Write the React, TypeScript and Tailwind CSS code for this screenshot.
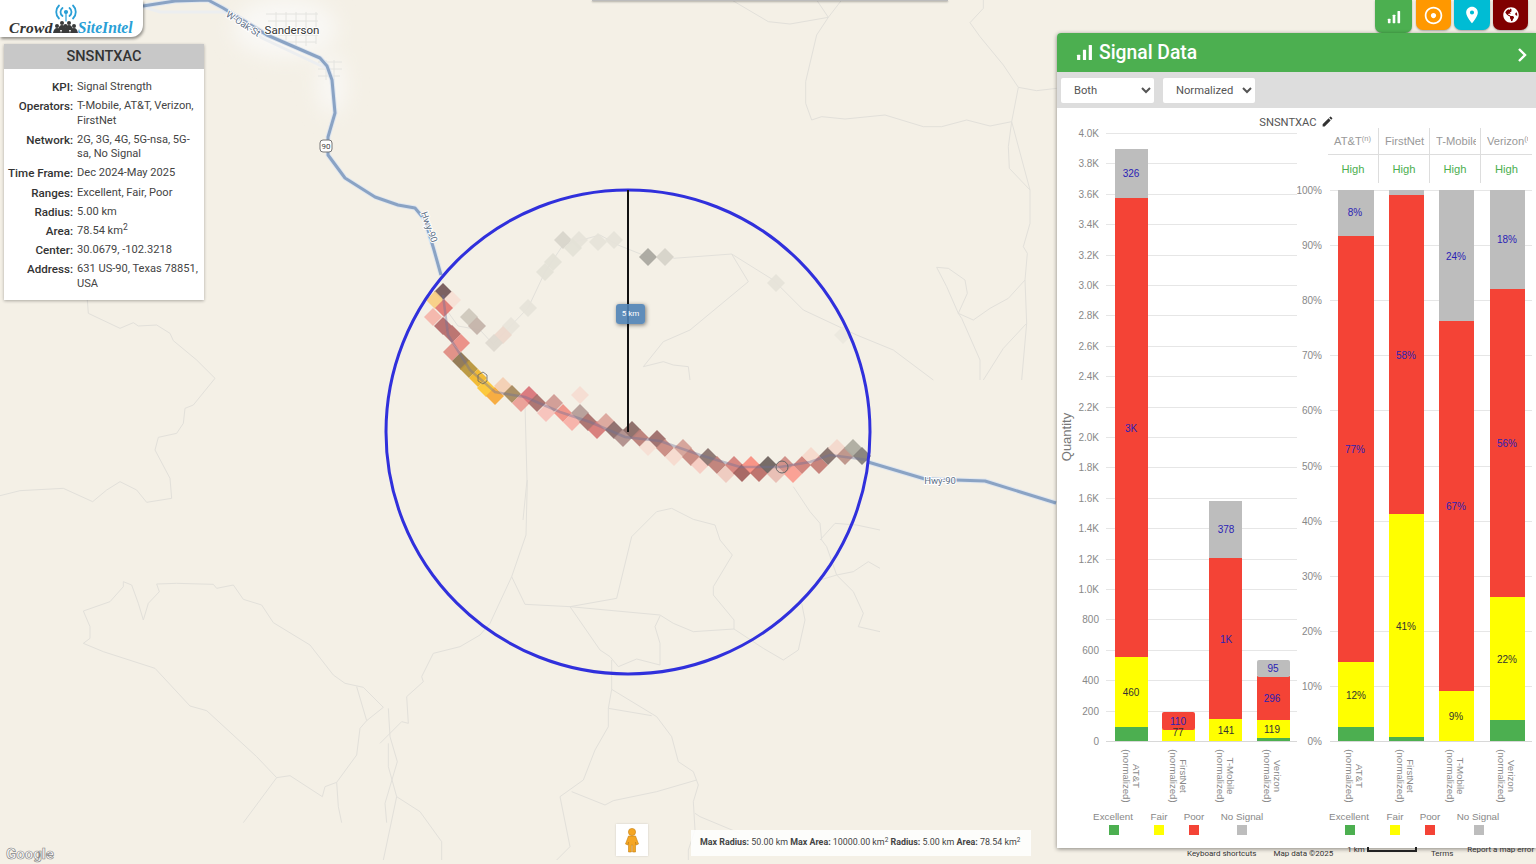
import React from 'react'
import { MdAdjust, MdEdit, MdLocationOn } from 'react-icons/md'
import { FaGlobeAmericas } from 'react-icons/fa'

// map tracks were read off at 3x, so each set keeps its crop origin
const track = (ox: number, oy: number, pts: number[][]) =>
    pts.map(([x, y]) => `${ox + x / 3},${oy + y / 3}`).join(' ')

const terrain = [
    track(0, 300, [[262, 0], [265, 40], [360, 85], [400, 68], [415, 78], [470, 75], [510, 100], [520, 122], [590, 180], [645, 235], [580, 315], [555, 325], [550, 370], [530, 400], [475, 412], [465, 450], [510, 535], [515, 595], [440, 607], [410, 570], [360, 545], [320, 570], [278, 605], [190, 565], [60, 572], [0, 587]]),
    track(0, 300, [[370, 845], [395, 855], [415, 910], [430, 960], [445, 910], [478, 875], [470, 852], [530, 850], [640, 853], [650, 865], [700, 855], [730, 898], [785, 915], [820, 968], [930, 1035], [1000, 1125], [1035, 1150], [1090, 1162], [1150, 1222], [1100, 1262], [1080, 1285], [1070, 1365], [1010, 1447], [975, 1460], [967, 1490], [870, 1427], [830, 1433], [770, 1370], [620, 1232], [570, 1218], [465, 1105], [310, 1055], [250, 1030], [270, 1015], [270, 980], [250, 933], [330, 905], [370, 860], [370, 845]]),
    track(0, 300, [[830, 1433], [730, 1568]]),
    track(0, 300, [[1010, 1447], [1015, 1520], [1025, 1568]]),
    track(0, 300, [[1070, 1160], [1100, 1262]]),
    track(0, 300, [[1165, 1225], [1170, 1310], [1192, 1385], [1155, 1510], [1160, 1568]]),
    track(380, 480, [[442, 0], [438, 165], [395, 290], [330, 430], [300, 465], [240, 500], [160, 520], [125, 590], [130, 605], [80, 650], [85, 730], [65, 725], [0, 790]]),
    track(380, 480, [[395, 290], [435, 373], [570, 380], [710, 355], [755, 170], [830, 95], [875, 85], [940, 118], [1005, 135], [1020, 180], [1057, 225], [1000, 320], [1000, 345], [1062, 420], [1062, 447], [940, 455], [880, 430], [840, 405], [570, 380]]),
    track(380, 480, [[840, 408], [825, 440], [840, 490], [840, 555], [770, 537], [715, 560], [690, 530], [660, 510], [570, 380]]),
    track(380, 480, [[1062, 447], [1150, 505], [1210, 540], [1255, 510], [1275, 420], [1265, 370]]),
    track(380, 480, [[695, 540], [695, 628], [685, 685], [685, 740], [645, 810], [610, 900], [540, 950], [570, 1100], [530, 1140]]),
    track(380, 480, [[695, 628], [830, 710], [875, 770], [895, 845], [940, 875], [955, 915], [940, 965], [945, 1050], [925, 1110], [925, 1140]]),
    track(380, 480, [[685, 685], [815, 707]]),
    track(380, 480, [[950, 900], [830, 935], [700, 962], [675, 975], [575, 935]]),
    track(380, 480, [[945, 1000], [960, 1010], [1080, 1060]]),
    track(380, 480, [[1240, 20], [1290, 95], [1320, 130], [1325, 180], [1340, 200], [1370, 285], [1420, 335], [1450, 400], [1435, 440], [1500, 455]]),
    track(380, 480, [[1320, 180], [1365, 130], [1430, 135], [1500, 150]]),
    track(380, 480, [[1320, 300], [1370, 285], [1420, 275], [1465, 245], [1500, 265]]),
    track(380, 480, [[25, 790], [25, 860], [50, 950], [10, 1140]]),
    track(380, 480, [[50, 950], [120, 995], [185, 1085], [185, 1140]]),
    track(640, 0, [[275, 0], [385, 65], [450, 72], [565, 52], [530, 0]]),
    track(640, 0, [[565, 52], [605, 0]]),
    track(640, 0, [[565, 52], [530, 105], [497, 245], [497, 310], [515, 360], [545, 350], [615, 357], [735, 345], [850, 380], [905, 380], [980, 360], [1050, 378], [1115, 365], [1135, 262], [1090, 195], [1020, 110], [990, 68], [1030, 25], [1030, 0]]),
    track(640, 0, [[1135, 262], [1190, 272], [1250, 265]]),
    track(640, 0, [[1115, 365], [1105, 440], [1108, 505], [1170, 570], [1115, 365]]),
    track(640, 0, [[1170, 570], [1170, 670], [1150, 740], [1162, 760], [1155, 840], [1160, 970], [1145, 1140]]),
    track(640, 0, [[1155, 840], [1105, 895], [1050, 925], [1000, 960], [955, 940], [965, 955], [1020, 1080], [1020, 1140]]),
    track(640, 0, [[955, 940], [920, 860], [890, 802], [925, 805], [975, 840], [982, 880], [955, 940]]),
    track(640, 0, [[1160, 970], [1090, 1045], [1030, 1140]]),
    track(640, 0, [[100, 775], [275, 762], [325, 845], [150, 990], [70, 1025], [10, 1100], [70, 1085], [100, 1095], [145, 1100], [150, 1140]]),
    track(640, 0, [[275, 762], [400, 840], [490, 930], [650, 1005], [760, 1050], [880, 1140]]),
    '494,343 528,308 545,272 563,245 600,235 618,245 648,257',
    '443,305 458,326 480,330 494,345',
    '525,405 527,480 523,520',
]

const cells: [number, number, string][] = [
    [443, 292, '#75595a'], [435, 300, '#f8cf85'], [452, 300, '#f7dfd5'], [444, 308, '#e07a74'], [433, 317, '#f4b5ab'],
    [443, 326, '#b56b6b'], [452, 334, '#b86f6b'], [461, 343, '#ea8d85'], [452, 352, '#df8d84'], [461, 361, '#8f7650'],
    [469, 369, '#b8963c'], [478, 378, '#f0b72c'], [486, 388, '#fcc635'], [495, 396, '#f7a93a'], [503, 386, '#f3cfb3'],
    [512, 394, '#a68a5f'], [521, 403, '#ea9e96'], [529, 395, '#d9757a'], [537, 403, '#a9706d'], [546, 413, '#f7c1ba'],
    [554, 403, '#d09a94'], [563, 413, '#ee8f85'], [572, 422, '#f7b0a8'], [580, 413, '#b59d98'], [580, 395, '#f6dcd2'],
    [588, 422, '#a9706d'], [597, 430, '#d77a78'], [606, 422, '#dba59c'], [614, 430, '#8c6c6a'], [623, 438, '#b08e8b'],
    [632, 430, '#8a6a66'], [640, 438, '#bb7e78'], [648, 447, '#f6ded4'], [657, 439, '#9d6d6a'], [665, 448, '#c98a82'],
    [674, 457, '#f6dacf'], [683, 448, '#d4a198'], [691, 457, '#c78880'], [700, 465, '#f6cbc2'], [708, 457, '#8a7470'],
    [717, 465, '#bf7f78'], [726, 474, '#eec9bf'], [734, 465, '#d5827c'], [742, 473, '#a3625f'], [751, 465, '#f98f82'],
    [759, 473, '#bb6e68'], [768, 465, '#706460'], [776, 474, '#e8bdb3'], [785, 465, '#cf8c85'], [793, 474, '#fa9d90'],
    [802, 465, '#d07f78'], [811, 456, '#f6d8cb'], [819, 465, '#c57d76'], [828, 456, '#85706c'], [837, 448, '#f3d8cc'],
    [845, 456, '#bd9288'], [853, 448, '#aeaca0'], [862, 456, '#85807a'],
    [563, 240, '#d8d5cb'], [579, 240, '#e6e3d9'], [573, 248, '#e4e1d7'], [598, 242, '#e6e3d9'], [614, 240, '#e6e3d9'],
    [648, 257, '#aaa8a0'], [665, 257, '#d6d3c9'], [553, 262, '#e4e1d7'], [545, 272, '#e4e1d7'], [528, 308, '#e6e3d9'],
    [511, 326, '#e8e4da'], [503, 335, '#ecd8cc'], [494, 343, '#ded9d0'], [469, 317, '#cfc8bd'], [477, 326, '#c4b3aa'],
    [776, 283, '#e6e3d9'], [843, 335, '#ebe8de'],
]

const COLORS = { good: '#4caf50', fair: '#ffff00', poor: '#f44336', none: '#bdbdbd' }
const BLUE = '#2b22b5'
const DARK = '#333333'

type Segment = { y1: number; y2: number; fill: string; rx?: number }
type Label = { x: number; y: number; text: string; fill: string }
type Bar = { x: number; w: number; segs: Segment[] }

const leftBars: Bar[] = [
    { x: 1115, w: 33, segs: [{ y1: 727, y2: 741, fill: COLORS.good }, { y1: 657, y2: 727, fill: COLORS.fair }, { y1: 198, y2: 657, fill: COLORS.poor }, { y1: 149, y2: 198, fill: COLORS.none }] },
    { x: 1162, w: 33, segs: [{ y1: 729, y2: 741, fill: COLORS.fair }, { y1: 712, y2: 730, fill: COLORS.poor, rx: 2 }] },
    { x: 1209, w: 33, segs: [{ y1: 719, y2: 741, fill: COLORS.fair }, { y1: 558, y2: 719, fill: COLORS.poor }, { y1: 501, y2: 558, fill: COLORS.none }] },
    { x: 1257, w: 33, segs: [{ y1: 738, y2: 741, fill: COLORS.good }, { y1: 720, y2: 738, fill: COLORS.fair }, { y1: 676, y2: 720, fill: COLORS.poor }, { y1: 660, y2: 677, fill: COLORS.none, rx: 2 }] },
]

const leftLabels: Label[] = [
    { x: 1131, y: 173, text: '326', fill: BLUE }, { x: 1131, y: 428, text: '3K', fill: BLUE }, { x: 1131, y: 692, text: '460', fill: DARK },
    { x: 1178, y: 721, text: '110', fill: BLUE }, { x: 1178, y: 732, text: '77', fill: DARK }, { x: 1226, y: 529, text: '378', fill: BLUE },
    { x: 1226, y: 639, text: '1K', fill: BLUE }, { x: 1226, y: 730, text: '141', fill: DARK }, { x: 1273, y: 668, text: '95', fill: BLUE },
    { x: 1272, y: 698, text: '296', fill: BLUE }, { x: 1272, y: 729, text: '119', fill: DARK },
]

const rightBars: Bar[] = [
    { x: 1338, w: 36, segs: [{ y1: 727, y2: 741, fill: COLORS.good }, { y1: 662, y2: 727, fill: COLORS.fair }, { y1: 236, y2: 662, fill: COLORS.poor }, { y1: 190, y2: 236, fill: COLORS.none }] },
    { x: 1389, w: 35, segs: [{ y1: 737, y2: 741, fill: COLORS.good }, { y1: 514, y2: 737, fill: COLORS.fair }, { y1: 195, y2: 514, fill: COLORS.poor }, { y1: 190, y2: 195, fill: COLORS.none }] },
    { x: 1439, w: 35, segs: [{ y1: 691, y2: 741, fill: COLORS.fair }, { y1: 321, y2: 691, fill: COLORS.poor }, { y1: 190, y2: 321, fill: COLORS.none }] },
    { x: 1490, w: 35, segs: [{ y1: 720, y2: 741, fill: COLORS.good }, { y1: 597, y2: 720, fill: COLORS.fair }, { y1: 289, y2: 597, fill: COLORS.poor }, { y1: 190, y2: 289, fill: COLORS.none }] },
]

const rightLabels: Label[] = [
    { x: 1355, y: 212, text: '8%', fill: BLUE }, { x: 1355, y: 449, text: '77%', fill: BLUE }, { x: 1356, y: 695, text: '12%', fill: DARK },
    { x: 1406, y: 355, text: '58%', fill: BLUE }, { x: 1406, y: 626, text: '41%', fill: DARK }, { x: 1456, y: 256, text: '24%', fill: BLUE },
    { x: 1456, y: 506, text: '67%', fill: BLUE }, { x: 1456, y: 716, text: '9%', fill: DARK }, { x: 1507, y: 239, text: '18%', fill: BLUE },
    { x: 1507, y: 443, text: '56%', fill: BLUE }, { x: 1507, y: 659, text: '22%', fill: DARK },
]

const info: [string, React.ReactNode][] = [
    ['KPI:', 'Signal Strength'],
    ['Operators:', 'T-Mobile, AT&T, Verizon, FirstNet'],
    ['Network:', '2G, 3G, 4G, 5G-nsa, 5G-sa, No Signal'],
    ['Time Frame:', 'Dec 2024-May 2025'],
    ['Ranges:', 'Excellent, Fair, Poor'],
    ['Radius:', '5.00 km'],
    ['Area:', <>78.54 km<sup className="text-[8.5px] leading-none">2</sup></>],
    ['Center:', '30.0679, -102.3218'],
    ['Address:', '631 US-90, Texas 78851, USA'],
]

const SignalBars = ({ size }: { size: number }) => (
    <svg width={size} height={size} viewBox="0 0 16 16" fill="white">
        <rect x="1" y="10" width="3" height="5" rx="0.5" />
        <rect x="6.5" y="5.5" width="3" height="9.5" rx="0.5" />
        <rect x="12" y="1" width="3" height="14" rx="0.5" />
    </svg>
)

const Logo = () => (
    <div className="absolute left-0 top-0 z-10 flex h-[37px] w-[143px] items-end rounded-br-[12px] bg-white pl-[9px] shadow-[1px_2px_3px_rgba(0,0,0,0.4)]">
        <svg className="absolute left-[53px] top-[4px]" width="26" height="18" viewBox="0 0 26 18" fill="none" stroke="#2a9fd6" strokeWidth="1.8" strokeLinecap="round">
            <path d="M9.5 4 a5 5 0 0 0 0 8" />
            <path d="M6 1.5 a9 9 0 0 0 0 13" />
            <path d="M16.5 4 a5 5 0 0 1 0 8" />
            <path d="M20 1.5 a9 9 0 0 1 0 13" />
            <circle cx="13" cy="8" r="1.2" fill="#2a9fd6" />
            <path d="M13 9 V17" strokeWidth="1.2" />
        </svg>
        <span className="text-[15.5px] leading-[18px] font-bold tracking-[0.3px] text-[#333] italic font-['Liberation_Serif',serif]">Crowd</span>
        <svg className="mb-[4px]" width="25" height="13" viewBox="0 0 25 13" fill="#3a3a3a">
            <circle cx="4" cy="6" r="2" /><circle cx="9" cy="3" r="2" /><circle cx="16" cy="3" r="2" /><circle cx="21" cy="6" r="2" /><circle cx="12.5" cy="6" r="2" />
            <path d="M0 13 q1-5 4-5 q3 0 4 5z M5 10 q1-5 4-5 q3 0 4 5z M12 10 q1-5 4-5 q3 0 4 5z M17 13 q1-5 4-5 q3 0 4 5z M8 13 q1-5 4.5-5 q3.5 0 4.5 5z" />
        </svg>
        <span className="text-[15.7px] leading-[18px] font-bold text-[#2a9fd6] italic font-['Liberation_Serif',serif]">SiteIntel</span>
    </div>
)

const InfoCard = () => (
    <div className="absolute left-[4px] top-[44px] z-10 w-[200px] bg-white shadow-[0_1px_3px_rgba(0,0,0,0.3)]">
        <h3 className="flex h-[25px] items-center justify-center bg-[#c8c8c8] text-[14.5px] font-medium text-[#333]">SNSNTXAC</h3>
        <div className="grid grid-cols-[69px_123px] gap-x-[4px] gap-y-[4.8px] pt-[11px] pb-[9px] text-[11.1px] leading-[14.4px]">
            {info.map(([label, value]) => (
                <React.Fragment key={label}>
                    <span className="text-right text-[11.6px] font-medium whitespace-nowrap text-[#333]">{label}</span>
                    <span className="text-[#444]">{value}</span>
                </React.Fragment>
            ))}
        </div>
    </div>
)

const MapLayer = () => (
    <svg className="absolute inset-0" width="1536" height="864" viewBox="0 0 1536 864">
        <defs>
            <filter id="townGlow" x="-30%" y="-30%" width="160%" height="160%">
                <feGaussianBlur stdDeviation="10" />
            </filter>
        </defs>
        <g filter="url(#townGlow)" fill="#f9f8f5">
            <ellipse cx="285" cy="28" rx="52" ry="30" />
            <ellipse cx="332" cy="85" rx="14" ry="30" />
        </g>
        <g stroke="#e4e4e0" strokeWidth="1" fill="none">
            <path d="M266 14 H318 M268 21 H318 M272 28 H318 M278 35 H318 M284 42 H316" />
            <path d="M276 12 V30 M286 12 V40 M296 12 V46 M306 12 V46 M316 12 V44" />
            <path d="M318 62 H342 M318 69 H342 M318 76 H340 M326 60 V80 M334 60 V80" />
        </g>
        <polyline points="120,0 160,12 225,12 262,38 330,70" fill="none" stroke="#eceef0" strokeWidth="3" />
        <g fill="none" stroke="#e2e0da" strokeWidth="1">
            {terrain.map((points, i) => <polyline key={i} points={points} />)}
        </g>
        <polyline
            points="143,6 175,1 208,0 223,8 267,35 320,58 327,66 332,80 335,113 328,137 328,155 345,178 375,197 398,205 415,208 425,220 434,250 441,275"
            fill="none" stroke="#dfe6ef" strokeWidth="5" strokeLinejoin="round"
        />
        <polyline
            points="143,6 175,1 208,0 223,8 267,35 320,58 327,66 332,80 335,113 328,137 328,155 345,178 375,197 398,205 415,208 425,220 434,250 441,275"
            fill="none" stroke="#8aa3c4" strokeWidth="3" strokeLinejoin="round"
        />
        <polyline points="868,462 925,479 985,481 1056,503" fill="none" stroke="#dfe6ef" strokeWidth="5" strokeLinejoin="round" />
        <polyline points="868,462 925,479 985,481 1056,503" fill="none" stroke="#8aa3c4" strokeWidth="3" strokeLinejoin="round" />
        <g>
            {cells.map(([x, y, c]) => (
                <polygon key={`${x}-${y}`} points={`${x},${y - 9} ${x + 9},${y} ${x},${y + 9} ${x - 9},${y}`} fill={c} opacity="0.95" />
            ))}
        </g>
        <polyline
            points="443,295 448,335 470,370 495,392 525,397 560,412 590,422 625,437 660,441 700,455 740,467 780,467 810,462 830,455 868,460"
            fill="none" stroke="#6f7199" strokeOpacity="0.4" strokeWidth="2.5"
        />
        <path d="M478 375 l5 -3 l4 3 v6 l-4 3 l-5 -3z" fill="none" stroke="#666" strokeWidth="0.8" />
        <circle cx="782" cy="467" r="6" fill="none" stroke="#666" strokeWidth="1" />
        <circle cx="628" cy="432" r="242" fill="none" stroke="#3030dc" strokeWidth="3" />
        <line x1="628" y1="190" x2="628" y2="432" stroke="#111" strokeWidth="2" />
        <rect x="320" y="140" width="12" height="12" rx="3" fill="white" stroke="#777" />
        <text x="326" y="149" fontSize="8" textAnchor="middle" fill="#444">90</text>
        <g fontFamily="Roboto, sans-serif" fill="#5d6f86" fontSize="9.5" stroke="white" strokeWidth="2" paintOrder="stroke">
            <text x="243" y="27" textAnchor="middle" transform="rotate(33 243 24)">W-Oak-St</text>
            <text x="429" y="230" textAnchor="middle" transform="rotate(70 429 227)">Hwy-90</text>
            <text x="940" y="484" textAnchor="middle">Hwy-90</text>
            <text x="292" y="34" textAnchor="middle" fontSize="11.5" fill="#333">Sanderson</text>
        </g>
    </svg>
)

const Axis = ({ ticks, x1, x2, labelX }: { ticks: [string, number][]; x1: number; x2: number; labelX: number }) => (
    <>
        {ticks.map(([t, y]) => (
            <g key={t}>
                <line x1={x1} x2={x2} y1={y + 0.5} y2={y + 0.5} stroke={y === 741 ? '#d8d8d8' : '#e6e6e6'} />
                <text x={labelX} y={y + 4} textAnchor="end" fontSize="10" fill="#888">{t}</text>
            </g>
        ))}
    </>
)

const Bars = ({ bars, labels }: { bars: Bar[]; labels: Label[] }) => (
    <>
        {bars.map((b, i) => (
            <g key={i}>
                {b.segs.map((s, j) => <rect key={j} x={b.x} y={s.y1} width={b.w} height={s.y2 - s.y1} fill={s.fill} rx={s.rx} />)}
            </g>
        ))}
        {labels.map((l, i) => (
            <text key={i} x={l.x} y={l.y + 4} textAnchor="middle" fontSize="10" fill={l.fill}>{l.text}</text>
        ))}
    </>
)

const XNames = ({ items }: { items: [string, number][] }) => (
    <g fontSize="9.6" fill="#888" textAnchor="middle">
        {items.map(([name, x]) => (
            <g key={name}>
                <text transform={`rotate(90 ${x} 776)`} x={x} y="776">{name}</text>
                <text transform={`rotate(90 ${x - 10} 776)`} x={x - 10} y="776">(normalized)</text>
            </g>
        ))}
    </g>
)

const Legend = ({ items }: { items: [string, number, number, string][] }) => (
    <g fontSize="9.8" fill="#888" textAnchor="middle">
        {items.map(([name, tx, sx, fill]) => (
            <g key={name}>
                <text x={tx} y="820">{name}</text>
                <rect x={sx} y="825" width="10" height="10" fill={fill} />
            </g>
        ))}
    </g>
)

const CountChart = () => {
    const ticks: [string, number][] = ['0', '200', '400', '600', '800', '1.0K', '1.2K', '1.4K', '1.6K', '1.8K', '2.0K', '2.2K', '2.4K', '2.6K', '2.8K', '3.0K', '3.2K', '3.4K', '3.6K', '3.8K', '4.0K'].map((t, i) => [t, Math.round(741 - i * 30.4)])
    return (
        <svg className="shrink-0 font-['Liberation_Sans',sans-serif]" width="240" height="720" viewBox="1057 128 240 720">
            <Axis ticks={ticks} x1={1106} x2={1297} labelX={1099} />
            <text transform="rotate(-90 1071 437)" x="1071" y="437" textAnchor="middle" fontSize="13" fill="#777">Quantity</text>
            <Bars bars={leftBars} labels={leftLabels} />
            <XNames items={[['AT&T', 1133], ['FirstNet', 1180], ['T-Mobile', 1227], ['Verizon', 1274]]} />
            <Legend items={[['Excellent', 1113, 1109, COLORS.good], ['Fair', 1159, 1154, COLORS.fair], ['Poor', 1194, 1189, COLORS.poor], ['No Signal', 1242, 1237, COLORS.none]]} />
        </svg>
    )
}

const PercentChart = () => {
    const ticks: [string, number][] = [0, 10, 20, 30, 40, 50, 60, 70, 80, 90, 100].map((p) => [`${p}%`, Math.round(741 - p * 5.51)])
    return (
        <svg className="block font-['Liberation_Sans',sans-serif]" width="239" height="664" viewBox="1297 184 239 664">
            <Axis ticks={ticks} x1={1330} x2={1532} labelX={1322} />
            <Bars bars={rightBars} labels={rightLabels} />
            <XNames items={[['AT&T', 1356], ['FirstNet', 1407], ['T-Mobile', 1457], ['Verizon', 1508]]} />
            <Legend items={[['Excellent', 1349, 1345, COLORS.good], ['Fair', 1395, 1390, COLORS.fair], ['Poor', 1430, 1425, COLORS.poor], ['No Signal', 1478, 1474, COLORS.none]]} />
        </svg>
    )
}

const OperatorTable = () => {
    const heads: React.ReactNode[] = [
        <>AT&amp;T<sup className="text-[7.5px]">(n)</sup></>,
        'FirstNet',
        'T-Mobile',
        <>Verizon<sup className="text-[7.5px]">(n)</sup></>,
    ]
    return (
        <div className="ml-[31px] grid h-[56px] w-[204px] grid-cols-4 grid-rows-[27px_29px] text-[11.2px] font-['Liberation_Sans',sans-serif]">
            {heads.map((h, i) => (
                <div key={i} className={`overflow-hidden border-b border-[#ddd] pl-[6px] leading-[26px] whitespace-nowrap text-[#999] ${i < 3 ? 'border-r' : ''}`}>
                    <div className={i === 2 ? 'w-[40px] overflow-hidden' : i === 3 ? 'w-[41px] overflow-hidden' : ''}>{h}</div>
                </div>
            ))}
            {heads.map((_, i) => (
                <div key={i} className={`mb-[1px] border-[#ddd] text-center leading-[28px] text-[#4caf50] ${i < 3 ? 'border-r' : ''}`}>High</div>
            ))}
        </div>
    )
}

const SignalPanel = () => (
    <div className="absolute left-[1057px] top-[33px] z-10 w-[479px] overflow-hidden rounded-tl-[4px] bg-white shadow-[0_1px_4px_rgba(0,0,0,0.45)]">
        <div className="flex h-[39px] items-center bg-[#4caf50] pl-[19px] pr-[8px]">
            <SignalBars size={17} />
            <span className="mt-[1px] ml-[6px] text-[19.3px] font-medium text-white">Signal Data</span>
            <svg className="mt-[4px] ml-auto" width="12" height="16" viewBox="0 0 12 16" fill="none" stroke="white" strokeWidth="2.4">
                <path d="M3 2 L9 8 L3 14" />
            </svg>
        </div>
        <div className="flex h-[36px] items-center gap-[9px] bg-[#dddddd] pl-[4px]">
            <select defaultValue="Both" className="h-[25px] w-[93px] rounded-[2px] bg-white pl-[9px] text-[11.2px] text-[#555]">
                <option>Both</option>
            </select>
            <select defaultValue="Normalized" className="h-[25px] w-[92px] rounded-[2px] bg-white pl-[9px] text-[11.2px] text-[#555]">
                <option>Normalized</option>
            </select>
        </div>
        <div className="flex h-[20px] items-start justify-center gap-[4px] pt-[7px] text-[11.2px] leading-[15px] text-[#555]">
            SNSNTXAC <MdEdit className="text-[13px] text-[#333]" />
        </div>
        <div className="flex">
            <CountChart />
            <div>
                <OperatorTable />
                <PercentChart />
            </div>
        </div>
    </div>
)

const TopButtons = () => (
    <div className="absolute right-[8px] top-0 z-10 flex gap-[3px] text-white">
        <button className="mr-[1px] flex h-[33px] w-[37px] items-center justify-center rounded-b-[7px] bg-[#4caf50] shadow-[0_1px_2px_rgba(0,0,0,0.3)]"><SignalBars size={14} /></button>
        <button className="flex h-[30px] w-[35px] items-center justify-center rounded-b-[7px] bg-[#ff9800] shadow-[0_1px_2px_rgba(0,0,0,0.3)]"><MdAdjust className="text-[21px]" /></button>
        <button className="flex h-[30px] w-[36px] items-center justify-center rounded-b-[7px] bg-[#00bcd4] shadow-[0_1px_2px_rgba(0,0,0,0.3)]"><MdLocationOn className="text-[20px]" /></button>
        <button className="flex h-[30px] w-[35px] items-center justify-center rounded-b-[7px] bg-[#800000] shadow-[0_1px_2px_rgba(0,0,0,0.3)]"><FaGlobeAmericas className="text-[16px]" /></button>
    </div>
)

const Pegman = () => (
    <div className="absolute left-[616px] top-[824px] flex h-[32px] w-[32px] items-center justify-center bg-white shadow-[0_0_2px_rgba(0,0,0,0.15)]">
        <svg width="14" height="25" viewBox="0 0 14 25" fill="#f5a623" stroke="#c47f12" strokeWidth="0.6">
            <circle cx="7" cy="4" r="3.6" />
            <path d="M3.5 8 H10.5 L13.5 16 L11 17 L10.5 14 V24 H7.6 V17 H6.4 V24 H3.5 V14 L3 17 L0.5 16Z" />
        </svg>
    </div>
)

const Attribution = () => (
    <>
        <div className="absolute left-[691px] top-[830px] flex h-[26px] w-[340px] items-center bg-white/85 pl-[9px] text-[8.9px] whitespace-nowrap text-[#444]">
            <span>
                <b className="font-bold">Max Radius:</b> 50.00 km <b className="font-bold">Max Area:</b> 10000.00 km<sup className="text-[6.5px]">2</sup> <b className="font-bold">Radius:</b> 5.00 km <b className="font-bold">Area:</b> 78.54 km<sup className="text-[6.5px]">2</sup>
            </span>
        </div>
        <span className="absolute left-[6px] top-[843px] text-[15px] font-bold text-white [-webkit-text-stroke:0.7px_#888]">Google</span>
        <div className="absolute left-[1187px] top-[848px] z-20 flex w-[349px] items-start text-[8px] leading-[12px] whitespace-nowrap text-[#333]">
            <span>Keyboard shortcuts</span>
            <span className="ml-[17px]">Map data ©2025</span>
            <span className="mt-[-4px] ml-[14px]">1 km</span>
            <span className="mt-[-1px] ml-[2px] h-[5px] w-[50px] border-x-2 border-b-2 border-[#222]" />
            <span className="ml-[14px]">Terms</span>
            <span className="mt-[-4px] ml-[14px]">Report a map error</span>
        </div>
    </>
)

const App = () => {
    return (
        <div className="relative h-[864px] w-[1536px] overflow-hidden bg-[#f4f0e6] font-[Roboto,sans-serif]">
            <MapLayer />
            <div className="absolute left-[592px] top-0 h-[1px] w-[356px] bg-[#bbb] shadow-[0_1px_2px_rgba(0,0,0,0.4)]" />
            <div className="absolute left-[616px] top-[304px] flex h-[20px] w-[29px] items-center justify-center rounded-[3px] bg-[#4f82b5]/90 text-[8px] text-white shadow-[1px_1px_4px_rgba(0,0,0,0.5)]">5 km</div>
            <Logo />
            <InfoCard />
            <TopButtons />
            <SignalPanel />
            <Pegman />
            <Attribution />
        </div>
    )
}

export default App
